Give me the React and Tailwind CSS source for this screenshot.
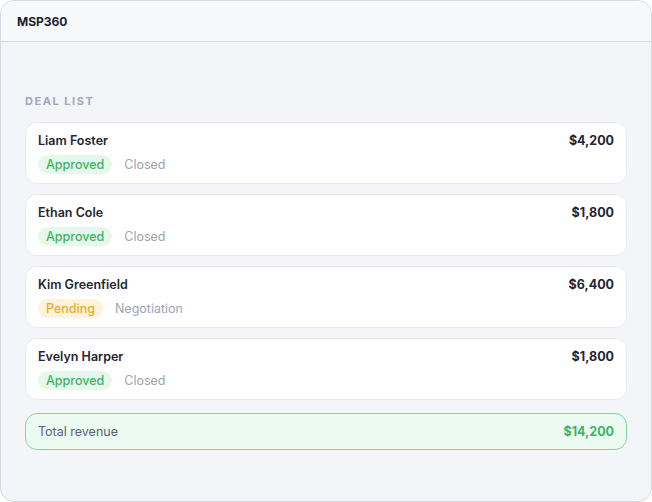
import React from 'react';

const deals = [
  { name: 'Liam Foster', amount: '$4,200', status: 'Approved', stage: 'Closed' },
  { name: 'Ethan Cole', amount: '$1,800', status: 'Approved', stage: 'Closed' },
  { name: 'Kim Greenfield', amount: '$6,400', status: 'Pending', stage: 'Negotiation' },
  { name: 'Evelyn Harper', amount: '$1,800', status: 'Approved', stage: 'Closed' },
];

const StatusBadge = ({ status }) => {
  const cls =
    status === 'Approved'
      ? 'bg-[#e6f7ec] text-[#3cb463]'
      : 'bg-[#fdf3dc] text-[#eeaa2a]';
  return (
    <span className={`inline-flex h-[19px] items-center rounded-full px-2 text-[12.5px] font-medium ${cls}`}>
      {status}
    </span>
  );
};

export default function App() {
  return (
    <div className="h-[502px] w-[652px] font-['Inter',sans-serif]">
      <div className="flex h-full flex-col overflow-hidden rounded-[14px] border border-[#d5d8de] bg-[#f4f5f9]">
        {/* Header */}
        <div className="flex h-[41px] shrink-0 items-center border-b border-[#d5d8de] bg-[#f7f8fa] px-4 pt-[2px]">
          <span className="text-[12px] font-bold text-[#1c2232]">MSP360</span>
        </div>

        {/* Body */}
        <div className="flex flex-col px-6 pt-[51px]">
          <div className="mb-[12px] text-[11px] font-bold tracking-[0.14em] text-[#a3a7b9]">DEAL LIST</div>

          <div className="flex flex-col gap-[10px]">
            {deals.map((deal) => (
              <div
                key={deal.name}
                className="flex h-[62px] flex-col justify-center gap-[5px] rounded-[12px] border border-[#e7e9ee] bg-white px-[12px] pt-[1px]"
              >
                <div className="flex items-center justify-between">
                  <span className="text-[12.5px] font-semibold text-[#1f2533]">{deal.name}</span>
                  <span className="text-[12.5px] font-bold text-[#1f2533]">{deal.amount}</span>
                </div>
                <div className="flex items-center gap-3">
                  <StatusBadge status={deal.status} />
                  <span className="text-[12.5px] text-[#9ea3ae]">{deal.stage}</span>
                </div>
              </div>
            ))}

            {/* Total */}
            <div className="mt-[3px] flex h-[37px] items-center justify-between rounded-[12px] border border-[#86d3a1] bg-[#ebfbf1] px-[12px] pt-[2px]">
              <span className="text-[12.5px] text-[#5b6475]">Total revenue</span>
              <span className="text-[12.5px] font-bold text-[#3cb463]">$14,200</span>
            </div>
          </div>
        </div>
      </div>
    </div>
  );
}
